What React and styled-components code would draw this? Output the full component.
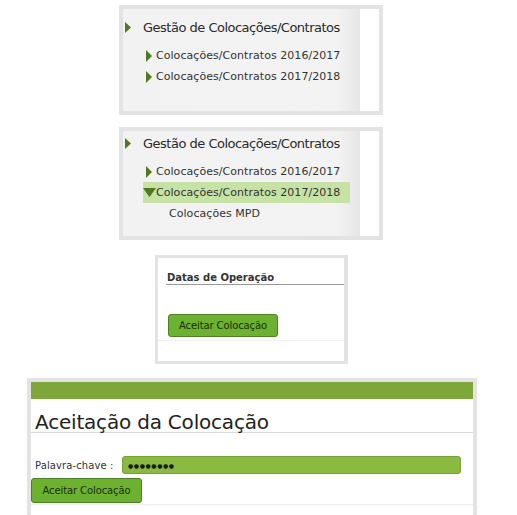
import React from "react";
import styled, { createGlobalStyle } from "styled-components";

const GlobalStyle = createGlobalStyle`
  html, body { margin: 0; padding: 0; background: #fff; overflow: hidden; }
  body { font-family: "DejaVu Sans", Verdana, sans-serif; color: #333; }
  * { box-sizing: border-box; }
`;

const Page = styled.div`
  display: flex;
  flex-direction: column;
  align-items: flex-start;
  padding-top: 5px;
  width: 517px;
`;

const MenuPanel = styled.div`
  flex: none;
  margin-left: 119px;
  margin-bottom: ${(p) => p.$gap || 0}px;
  width: 264px;
  height: ${(p) => p.$h}px;
  border: 4px solid #e3e3e3;
  display: flex;
`;

const MenuBody = styled.div`
  flex: 1;
  background: linear-gradient(to right, #f2f2f2 0, #f3f3f3 90%, #eaeaea 97%, #e5e5e5 100%);
  padding-top: ${(p) => p.$pt}px;
  display: flex;
  flex-direction: column;
`;

const SideStrip = styled.div`
  width: 19px;
  background: #fff;
`;

const Heading = styled.div`
  display: flex;
  align-items: center;
  height: 16px;
  padding-left: 2px;
  font-family: Tahoma, "DejaVu Sans", sans-serif;
  font-size: 13px;
  letter-spacing: -0.5px;
  color: #2a2a2a;
  margin-bottom: 10px;
  white-space: nowrap;
`;

const HeadingText = styled.span`
  margin-left: 12px;
`;

const Item = styled.div`
  display: flex;
  align-items: center;
  height: 21px;
  margin-left: 20px;
  width: 207px;
  padding-left: ${(p) => (p.$leaf ? 26 : p.$open ? 0 : 3)}px;
  background: ${(p) => (p.$active ? "#c6e2a5" : "transparent")};
  font-size: 11px;
  letter-spacing: 0.05px;
  color: #333;
  white-space: nowrap;
`;

const ItemText = styled.span`
  margin-left: ${(p) => p.$ml || 0}px;
`;

const RightTri = ({ w = 6, h = 11, c = "#4d7a1c" }) => (
  <svg width={w} height={h} viewBox={`0 0 ${w} ${h}`} style={{ flex: "none" }}>
    <polygon points={`0,0 ${w},${h / 2} 0,${h}`} fill={c} />
  </svg>
);

const DownTri = () => (
  <svg width="13" height="9" viewBox="0 0 13 9" style={{ flex: "none" }}>
    <polygon points="0,0 13,0 6.5,9" fill="#4d7a1c" />
  </svg>
);

const FormPanel = styled.div`
  flex: none;
  margin-left: 155px;
  margin-top: 3px;
  width: 193px;
  height: 109px;
  border: 3px solid #e3e3e3;
  border-right-width: 4px;
  background: #fff;
  padding-top: 14px;
`;

const SectionTitle = styled.div`
  margin-left: 8px;
  font-size: 10px;
  font-weight: bold;
  color: #333;
  padding-left: 1px;
  padding-bottom: 1px;
  border-bottom: 1px solid #999;
`;

const ButtonRow = styled.div`
  padding: ${(p) => p.$pad};
  border-bottom: 1px solid #eee;
  display: flex;
`;

const GreenButton = styled.button`
  height: ${(p) => p.$h || 24}px;
  width: ${(p) => p.$w}px;
  padding: 0;
  background: #6cb12f;
  border: 1px solid #4f7f24;
  border-radius: 3px;
  color: #1c2f0c;
  font-family: "DejaVu Sans", Verdana, sans-serif;
  font-size: 10px;
  letter-spacing: -0.1px;
`;

const MainPanel = styled.div`
  flex: none;
  margin-left: 27px;
  margin-top: 14px;
  width: 450px;
  border: 4px solid #e3e3e3;
  border-bottom: none;
  height: 137px;
  background: #fff;
`;

const Bar = styled.div`
  height: 17px;
  background: #7fa63b;
`;

const Title = styled.h1`
  margin: 0;
  padding: 12px 0 0 4px;
  height: 34px;
  font-family: "DejaVu Sans", Verdana, sans-serif;
  font-weight: normal;
  font-size: 20px;
  letter-spacing: -0.2px;
  color: #222;
  line-height: 22px;
  border-bottom: 1px solid #dcdcdc;
`;

const FormRow = styled.div`
  display: flex;
  align-items: center;
  margin-top: 23px;
  padding-left: 4px;
  height: 18px;
`;

const Label = styled.span`
  font-size: 10px;
  color: #333;
  width: 87px;
  letter-spacing: 0.1px;
`;

const PasswordField = styled.div`
  width: 339px;
  height: 18px;
  background: #8aba40;
  border: 1px solid #78a035;
  border-radius: 3px;
  display: flex;
  align-items: center;
  padding-left: 5px;
  font-size: 6px;
  letter-spacing: 0.6px;
  color: #1a1a1a;
`;

export default function App() {
  return (
    <>
      <GlobalStyle />
      <Page>
        <MenuPanel $h={110} $gap={12}>
          <MenuBody $pt={10}>
            <Heading>
              <RightTri w={6} h={11} />
              <HeadingText>Gestão de Colocações/Contratos</HeadingText>
            </Heading>
            <Item>
              <RightTri w={6} h={12} />
              <ItemText $ml={4}>Colocações/Contratos 2016/2017</ItemText>
            </Item>
            <Item>
              <RightTri w={6} h={12} />
              <ItemText $ml={4}>Colocações/Contratos 2017/2018</ItemText>
            </Item>
          </MenuBody>
          <SideStrip />
        </MenuPanel>

        <MenuPanel $h={113} $gap={12}>
          <MenuBody $pt={4}>
            <Heading>
              <RightTri w={6} h={11} />
              <HeadingText>Gestão de Colocações/Contratos</HeadingText>
            </Heading>
            <Item>
              <RightTri w={6} h={12} />
              <ItemText $ml={4}>Colocações/Contratos 2016/2017</ItemText>
            </Item>
            <Item $active $open>
              <DownTri />
              <ItemText>Colocações/Contratos 2017/2018</ItemText>
            </Item>
            <Item $leaf>
              <ItemText>Colocações MPD</ItemText>
            </Item>
          </MenuBody>
          <SideStrip />
        </MenuPanel>

        <FormPanel>
          <SectionTitle>Datas de Operação</SectionTitle>
          <ButtonRow $pad="29px 0 3px 10px">
            <GreenButton $w={110} $h={23}>Aceitar Colocação</GreenButton>
          </ButtonRow>
        </FormPanel>

        <MainPanel>
          <Bar />
          <Title>Aceitação da Colocação</Title>
          <FormRow>
            <Label>Palavra-chave :</Label>
            <PasswordField>●●●●●●●●</PasswordField>
          </FormRow>
          <ButtonRow $pad="4px 0 1px 0">
            <GreenButton $w={111} $h={25}>Aceitar Colocação</GreenButton>
          </ButtonRow>
        </MainPanel>
      </Page>
    </>
  );
}
